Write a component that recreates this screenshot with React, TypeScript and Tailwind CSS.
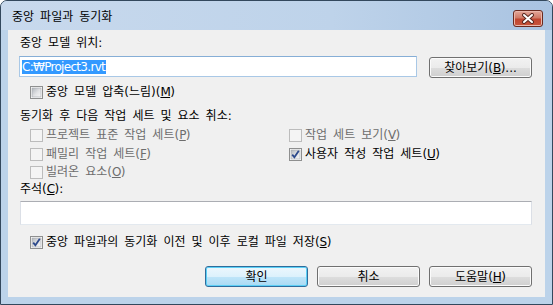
import React from "react";

// ── Small pieces ──────────────────────────────────────────────────────────────

type BoxState = "on" | "off" | "disabled";

function CheckBox({ state }: { state: BoxState }) {
  if (state === "disabled") {
    return (
      <svg width="13" height="13" viewBox="0 0 13 13" className="shrink-0">
        <rect x="0.5" y="0.5" width="12" height="12" fill="#f4f4f4" stroke="#bcbcbc" />
      </svg>
    );
  }
  return (
    <svg width="13" height="13" viewBox="0 0 13 13" className="shrink-0">
      <defs>
        <linearGradient id="cbInner" x1="0" y1="0" x2="1" y2="1">
          <stop offset="0" stopColor="#b0b5bb" />
          <stop offset="0.55" stopColor="#e2e3e5" />
          <stop offset="1" stopColor="#f6f6f6" />
        </linearGradient>
      </defs>
      <rect x="0.5" y="0.5" width="12" height="12" fill="#fdfdfd" stroke="#8e8f8f" />
      <rect x="2" y="2" width="9" height="9" fill="url(#cbInner)" stroke="#a5a8ad" strokeWidth="0.6" />
      {state === "on" && (
        <path d="M3.2 6.6 L5.4 9.2 L9.8 2.8" fill="none" stroke="#2d4a8c" strokeWidth="1.8" />
      )}
    </svg>
  );
}

function Check({
  state,
  children,
}: {
  state: BoxState;
  children: React.ReactNode;
}) {
  return (
    <div className="flex items-center gap-[3px] h-full">
      <CheckBox state={state} />
      <span className={state === "disabled" ? "text-[#6d6d6d]" : "text-black"}>{children}</span>
    </div>
  );
}

// mnemonic letter, latin text runs a little tighter
function U({ children }: { children: React.ReactNode }) {
  return <span className="underline underline-offset-[1px] tracking-[-0.6px]">{children}</span>;
}

function Button({
  primary,
  children,
}: {
  primary?: boolean;
  children: React.ReactNode;
}) {
  return (
    <div
      className={
        primary
          ? "w-[103px] h-[21px] rounded-[3px] border border-[#2f6c9c] bg-[linear-gradient(#ecf7fd_0%,#dcf1fc_50%,#bfe5f9_51%,#a9daf3_100%)] shadow-[inset_0_0_0_1px_#5cd0f6] flex items-center justify-center"
          : "w-[103px] h-[21px] rounded-[3px] border border-[#707070] bg-[linear-gradient(#f2f2f2_0%,#ebebeb_50%,#dddddd_51%,#cfcfcf_100%)] shadow-[inset_0_0_0_1px_#fbfbfb] flex items-center justify-center"
      }
    >
      {children}
    </div>
  );
}

// ── Dialog ────────────────────────────────────────────────────────────────────

export default function App() {
  return (
    <div className="w-[553px] h-[305px] font-['DejaVu_Sans','Noto_Sans_CJK_KR',sans-serif] text-[12px] leading-[16px] tracking-[0px] [word-spacing:2.2px] text-black">
      <div className="w-[553px] h-[305px] rounded-t-[7px] border border-[#33485d] bg-[#bcd3ea] flex flex-col overflow-hidden">
        {/* title bar */}
        <div className="h-[29px] shrink-0 flex items-start justify-between pl-[11px] pr-[9px] bg-[linear-gradient(90deg,#c8d9ed_0%,#bed3ea_60%,#a9c3e1_100%)]">
          <span className="mt-[8px]">중앙 파일과 동기화</span>
          <div className="mt-[9px] w-[30px] h-[17px] rounded-[3px] border border-[#6a2a1f] bg-[linear-gradient(#e4a89b_0%,#d07a66_45%,#c0452f_55%,#c8553c_100%)] shadow-[inset_0_0_0_1px_#eab7ab] flex items-center justify-center">
            <svg width="14" height="11" viewBox="0 0 14 11">
              <path d="M3 2 L11 9 M11 2 L3 9" stroke="#5a2a22" strokeWidth="4" strokeLinecap="round" />
              <path d="M3 2 L11 9 M11 2 L3 9" stroke="#ffffff" strokeWidth="2" strokeLinecap="round" />
            </svg>
          </div>
        </div>

        {/* client area */}
        <div className="mx-[7px] h-[267px] shrink-0 bg-[#f0f0f0] flex flex-col">
          <div className="mt-[5px] ml-[12px]">중앙 모델 위치:</div>

          <div className="mt-[5px] flex items-start">
            <div className="ml-[11px] w-[398px] h-[21px] border border-[#a9c8e6] border-t-[#86aed6] bg-white flex items-center pl-[2px]">
              <span className="bg-[#3399ff] text-white leading-[14px] pr-[1px] tracking-[-0.7px]">C:₩Project3.rvt</span>
            </div>
            <div className="ml-[12px] mt-[1px]">
              <Button>
                찾아보기(<U>B</U>)...
              </Button>
            </div>
          </div>

          <div className="mt-[6px] ml-[22px] h-[16px]">
            <Check state="off">
              중앙 모델 압축(느림)(<U>M</U>)
            </Check>
          </div>

          <div className="mt-[8px] ml-[12px]">동기화 후 다음 작업 세트 및 요소 취소:</div>

          <div className="ml-[22px] mt-[2px] grid grid-cols-[259px_1fr]">
            <div className="h-[18px]">
              <Check state="disabled">
                프로젝트 표준 작업 세트(<U>P</U>)
              </Check>
            </div>
            <div className="h-[18px]">
              <Check state="disabled">
                작업 세트 보기(<U>V</U>)
              </Check>
            </div>
            <div className="h-[18px] mt-[1px]">
              <Check state="disabled">
                패밀리 작업 세트(<U>F</U>)
              </Check>
            </div>
            <div className="h-[18px] mt-[1px]">
              <Check state="on">
                사용자 작성 작업 세트(<U>U</U>)
              </Check>
            </div>
            <div className="h-[18px]">
              <Check state="disabled">
                빌려온 요소(<U>O</U>)
              </Check>
            </div>
            <div className="h-[18px]" />
          </div>

          <div className="ml-[12px]">
            주석(<U>C</U>):
          </div>

          <div className="mt-[4px] ml-[12px] w-[512px] h-[24px] border border-[#dbdfe6] border-t-[#abadb3] border-b-[#e3e9ef] bg-white" />

          <div className="mt-[9px] ml-[22px] h-[16px]">
            <Check state="on">
              중앙 파일과의 동기화 이전 및 이후 로컬 파일 저장(<U>S</U>)
            </Check>
          </div>

          <div className="mt-[16px] pr-[13px] flex justify-end gap-[9px]">
            <Button primary>확인</Button>
            <Button>취소</Button>
            <Button>
              도움말(<U>H</U>)
            </Button>
          </div>
        </div>
      </div>
    </div>
  );
}
